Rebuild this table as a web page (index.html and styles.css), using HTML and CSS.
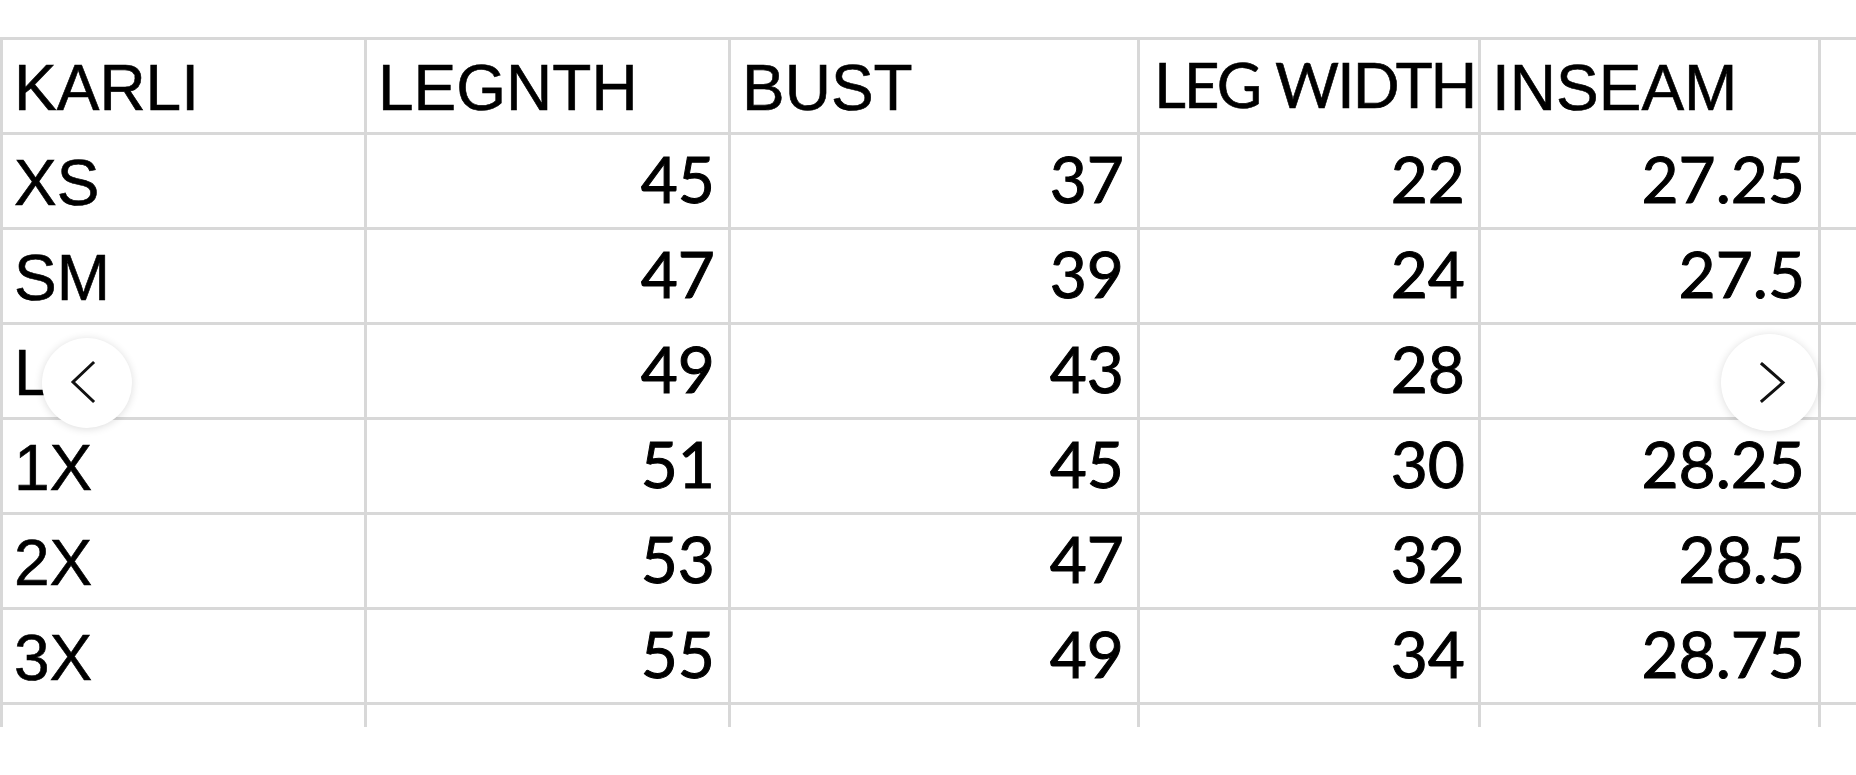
FILE: index.html
```html
<!DOCTYPE html>
<html lang="en">
<head>
<meta charset="utf-8">
<title>KARLI size chart</title>
<link rel="stylesheet" href="styles.css">
</head>
<body>
<div class="viewer">
  <div class="sheet">
    <div class="grid">
      <div class="cell">KARLI</div>
      <div class="cell">LEGNTH</div>
      <div class="cell">BUST</div>
      <div class="cell cal">LEG WIDTH</div>
      <div class="cell">INSEAM</div>
      <div class="cell"></div>

      <div class="cell">XS</div>
      <div class="cell num">45</div>
      <div class="cell num">37</div>
      <div class="cell num">22</div>
      <div class="cell num">27.25</div>
      <div class="cell"></div>

      <div class="cell">SM</div>
      <div class="cell num">47</div>
      <div class="cell num">39</div>
      <div class="cell num">24</div>
      <div class="cell num">27.5</div>
      <div class="cell"></div>

      <div class="cell">LG</div>
      <div class="cell num">49</div>
      <div class="cell num">43</div>
      <div class="cell num">28</div>
      <div class="cell num">28</div>
      <div class="cell"></div>

      <div class="cell">1X</div>
      <div class="cell num">51</div>
      <div class="cell num">45</div>
      <div class="cell num">30</div>
      <div class="cell num">28.25</div>
      <div class="cell"></div>

      <div class="cell">2X</div>
      <div class="cell num">53</div>
      <div class="cell num">47</div>
      <div class="cell num">32</div>
      <div class="cell num">28.5</div>
      <div class="cell"></div>

      <div class="cell">3X</div>
      <div class="cell num">55</div>
      <div class="cell num">49</div>
      <div class="cell num">34</div>
      <div class="cell num">28.75</div>
      <div class="cell"></div>

      <div class="cell"></div>
      <div class="cell"></div>
      <div class="cell"></div>
      <div class="cell"></div>
      <div class="cell"></div>
      <div class="cell"></div>
    </div>
  </div>

  <button class="nav nav-prev" aria-label="Previous">
    <svg viewBox="0 0 90 90" width="90" height="90"><polyline points="51,25 31,44 51,63" fill="none" stroke="#111" stroke-width="3" stroke-linecap="square" stroke-linejoin="miter"/></svg>
  </button>
  <button class="nav nav-next" aria-label="Next">
    <svg viewBox="0 0 97 97" width="97" height="97"><polyline points="41,30 62,48.5 41,67" fill="none" stroke="#111" stroke-width="3" stroke-linecap="square" stroke-linejoin="miter"/></svg>
  </button>
</div>
</body>
</html>
```

FILE: styles.css
```css
html, body {
  margin: 0;
  padding: 0;
  background: #ffffff;
  overflow: hidden;
}

body {
  width: 1856px;
  height: 775px;
  font-family: "Liberation Sans", Arial, sans-serif;
  color: #000;
}

.viewer {
  position: relative;
  width: 1856px;
  height: 775px;
}

.sheet {
  padding-top: 37px;
  height: 690px;
  overflow: hidden;
}

.grid {
  display: grid;
  grid-template-columns: 364px 364px 409px 341px 340px 120px;
  grid-auto-rows: 95px;
  border-top: 3px solid #d8d8d8;
  border-left: 3px solid #d8d8d8;
  width: max-content;
}

.cell {
  box-sizing: border-box;
  border-right: 3px solid #d8d8d8;
  border-bottom: 3px solid #d8d8d8;
  font-size: 64px;
  line-height: 88px;
  padding: 4px 8px 0 11px;
  white-space: nowrap;
  overflow: visible;
  -webkit-text-stroke: 0.6px #000;
}

.cal {
  font-family: Lato, "Open Sans", sans-serif;
  font-size: 62px;
  padding-top: 0;
  letter-spacing: -2px;
  word-spacing: 2px;
  padding-left: 14px;
}

.num {
  font-family: Lato, "Open Sans", sans-serif;
  padding-top: 0;
  padding-right: 13px;
  text-align: right;
  -webkit-text-stroke: 1px #000;
}

.nav {
  position: absolute;
  padding: 0;
  margin: 0;
  border: none;
  border-radius: 50%;
  background: #fff;
  box-shadow: 0 1px 9px rgba(0, 0, 0, 0.14);
  display: flex;
  align-items: center;
  justify-content: center;
  cursor: pointer;
}

.nav svg {
  display: block;
}

.nav-prev {
  left: 42px;
  top: 338px;
  width: 90px;
  height: 90px;
}

.nav-next {
  left: 1721px;
  top: 334px;
  width: 97px;
  height: 97px;
}
```
